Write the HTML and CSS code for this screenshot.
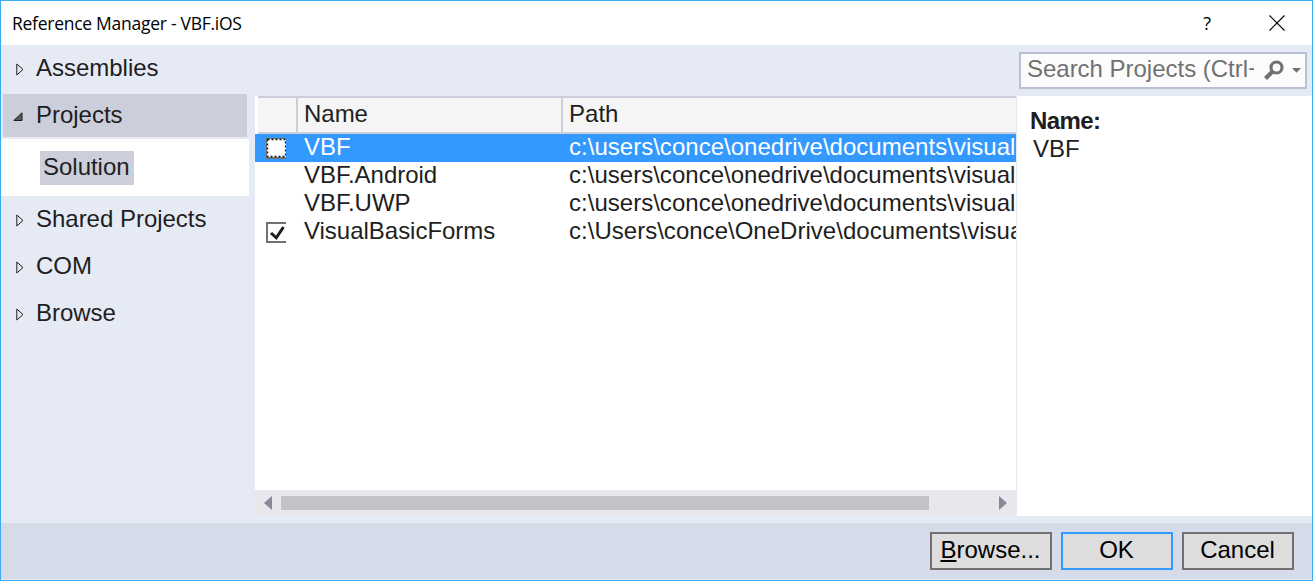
FILE: index.html
```html
<!DOCTYPE html>
<html lang="en">
<head>
<meta charset="utf-8">
<title>Reference Manager - VBF.iOS</title>
<link rel="stylesheet" href="styles.css">
</head>
<body>
<div class="dialog">
  <header class="titlebar">
    <span class="title">Reference Manager - VBF.iOS</span>
    <span class="help">?</span>
    <svg class="close" width="16" height="16" viewBox="0 0 16 16"><path d="M.5 .5l15 15M15.500 .5l-15 15" stroke="#000" stroke-width="1.1" fill="none"/></svg>
  </header>
  <main class="body">
    <nav class="sidebar">
      <div class="nav-item"><svg class="arrow" width="8" height="13" viewBox="0 0 8 13"><path d="M.8 1v11L7 6.500z"/></svg><span>Assemblies</span></div>
      <div class="nav-item active"><svg class="arrow-open" width="10" height="10" viewBox="0 0 10 10"><path d="M9 .8V8.500H.8z"/></svg><span>Projects</span></div>
      <div class="nav-children"><span class="chip">Solution</span></div>
      <div class="nav-item"><svg class="arrow" width="8" height="13" viewBox="0 0 8 13"><path d="M.8 1v11L7 6.500z"/></svg><span>Shared Projects</span></div>
      <div class="nav-item"><svg class="arrow" width="8" height="13" viewBox="0 0 8 13"><path d="M.8 1v11L7 6.500z"/></svg><span>COM</span></div>
      <div class="nav-item"><svg class="arrow" width="8" height="13" viewBox="0 0 8 13"><path d="M.8 1v11L7 6.500z"/></svg><span>Browse</span></div>
    </nav>
    <section class="content">
      <div class="toolbar">
        <div class="search">
          <span class="search-text">Search Projects (Ctrl+E)</span>
          <svg class="glass" width="20" height="20" viewBox="0 0 20 20"><circle cx="12.500" cy="7.500" r="5.500" fill="none" stroke="#717171" stroke-width="3.200"/><path d="M8.500 11.500L1.500 18.500" stroke="#717171" stroke-width="4.200"/></svg>
          <svg class="caret" width="9" height="5" viewBox="0 0 9 5"><path d="M0 0h9L4.500 4.700z" fill="#717171"/></svg>
        </div>
      </div>
      <div class="panes">
        <div class="list">
          <div class="row head"><span class="c-check"></span><span class="c-name">Name</span><span class="c-path">Path</span></div>
          <div class="row selected"><span class="c-check"><svg width="20" height="21" viewBox="0 0 20 21"><path d="M0 0H20V21H0z" fill="#fff"/><path d="M20 1H1V20H20" fill="none" stroke="#717171" stroke-width="2"/><path d="M1.500 1.500H19.500V18.500H1.500z" fill="none" stroke="#fff"/><path d="M1.500 1.500H19.500V18.500H1.500z" fill="none" stroke="#111" stroke-width="1.300" stroke-dasharray="2 2"/></svg></span><span class="c-name">VBF</span><span class="c-path">c:\users\conce\onedrive\documents\visual</span></div>
          <div class="row"><span class="c-check"></span><span class="c-name">VBF.Android</span><span class="c-path">c:\users\conce\onedrive\documents\visual</span></div>
          <div class="row"><span class="c-check"></span><span class="c-name">VBF.UWP</span><span class="c-path">c:\users\conce\onedrive\documents\visual</span></div>
          <div class="row"><span class="c-check"><svg width="20" height="21" viewBox="0 0 20 21"><path d="M0 0H20V21H0z" fill="#fefefe"/><path d="M20 1H1V20H20" fill="none" stroke="#717171" stroke-width="2"/><path d="M5 11L10.300 15.800L17.500 5" fill="none" stroke="#1e1e1e" stroke-width="3"/></svg></span><span class="c-name">VisualBasicForms</span><span class="c-path">c:\Users\conce\OneDrive\documents\visual</span></div>
          <div class="filler"></div>
          <div class="scrollbar">
            <svg width="8" height="14" viewBox="0 0 8 14"><path d="M8 0v14L0 7z" fill="#868999"/></svg>
            <div class="track"><div class="thumb"></div></div>
            <svg width="8" height="14" viewBox="0 0 8 14"><path d="M0 0v14L8 7z" fill="#868999"/></svg>
          </div>
        </div>
        <aside class="details"><div class="label">Name:</div><div class="value">VBF</div></aside>
      </div>
    </section>
  </main>
  <footer class="footer">
    <button class="btn browse"><span class="key">B</span>rowse...</button>
    <button class="btn ok">OK</button>
    <button class="btn">Cancel</button>
  </footer>
</div>
</body>
</html>
```
FILE: styles.css
```css
* { box-sizing: border-box; }
body { margin: 0; }
svg { display: block; flex: none; }
.dialog { width: 1313px; height: 581px; border: 1px solid #3aabf0; display: flex; flex-direction: column; overflow: hidden; background: #e6eaf5; color: #1e1e1e; font: 24px/28px "Liberation Sans", Arial, sans-serif; letter-spacing: -.02px; white-space: nowrap; }
.titlebar { height: 44px; flex: none; background: #fff; display: flex; align-items: center; padding: 0 27px 1px 11px; font: 17.5px/24px "Open Sans", "Noto Sans", sans-serif; color: #000; }
.title { flex: 1; letter-spacing: -.27px; }
.help { margin-right: 58px; font-size: 18px; }
.body { height: 478px; flex: none; display: flex; }
.sidebar { width: 248px; flex: none; margin-right: 6px; padding-top: 2px; }
.nav-item { height: 43px; margin: 0 2px 4px; display: flex; align-items: center; padding-left: 13px; }
.nav-item span { padding-bottom: 1px; }
.arrow { margin: 1px 12px 0 0; }
.arrow path { fill: none; stroke: #1e1e1e; stroke-width: 1; }
.nav-item.active { background: #cccedb; margin-bottom: 2px; padding-left: 10px; }
.arrow-open { margin: 2px 13px 0 0; }
.arrow-open path { fill: #595959; stroke: #1e1e1e; }
.nav-children { height: 57px; margin-bottom: 2px; background: #fff; padding: 12px 0 0 39px; }
.chip { display: block; width: 94px; height: 34px; background: #cccedb; padding: 2px 3px; }
.content { flex: 1; min-width: 0; display: flex; flex-direction: column; }
.toolbar { height: 51px; display: flex; justify-content: flex-end; padding: 7px 5px 0 0; }
.search { width: 288px; height: 37px; border: 2px solid #b9c2d4; background: #fcfcfc; color: #717171; display: flex; align-items: center; padding: 0 4px 0 6px; }
.search-text { width: 227px; overflow: hidden; margin-right: 10px; padding-bottom: 3px; }
.glass { margin: 0 8px 2px 0; }
.caret { margin-top: 0; }
.panes { height: 420px; display: flex; }
.list { width: 761px; margin-right: 1px; background: #fff; display: flex; flex-direction: column; overflow: hidden; }
.row { height: 28px; flex: none; display: flex; overflow: hidden; }
.row span { flex: none; height: 100%; }
.c-check { width: 42px; padding: 4px 0 0 11px; }
.c-name { width: 265px; padding-left: 7px; line-height: 26px; }
.c-path { width: 454px; padding-left: 7px; line-height: 26px; overflow: hidden; letter-spacing: .02px; }
.head { height: 38px; margin-left: 3px; background: #f5f5f5; border-top: 2px solid #cccedb; border-bottom: 2px solid #cccedb; }
.head .c-check { width: 38px; }
.head .c-name, .head .c-path { border-left: 2px solid #cccedb; padding-left: 6px; line-height: 32px; }
.selected { background: #3399ff; color: #fff; }
.filler { flex: 1; }
.scrollbar { height: 26px; background: #e8e8ec; display: flex; align-items: center; gap: 9px; padding: 0 9px; }
.track { flex: 1; height: 14px; }
.thumb { width: 648px; height: 14px; background: #c2c3c9; }
.details { flex: 1; background: #fff; padding: 11px 0 0 13px; }
.label { font-weight: bold; letter-spacing: -.6px; }
.value { padding-left: 3px; }
.footer { height: 56px; flex: none; background: #d6dbe9; display: flex; justify-content: flex-end; gap: 9px; padding: 9px 18px 0 0; }
.btn { width: 112px; height: 38px; padding: 0 1px 2px 0; border: 2px solid #717171; background: #ddd; color: #000; font: inherit; }
.browse { width: 122px; }
.ok { border-color: #3399ff; }
.key { text-decoration: underline; text-decoration-thickness: 2px; text-underline-offset: 2px; }
```
